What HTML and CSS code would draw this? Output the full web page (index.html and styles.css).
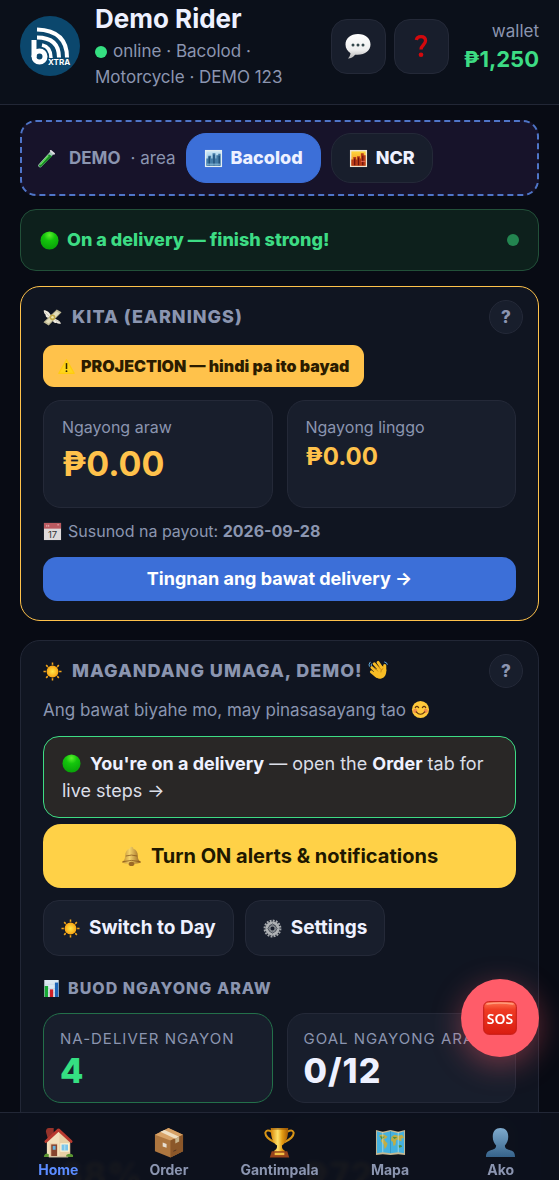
FILE: index.html
```
<!DOCTYPE html>
<html lang="en">

<head>
	<meta charset="UTF-8">
	<meta name="viewport" content="width=device-width, initial-scale=1">
	<title>Bxtra Rider</title>
	<link rel="stylesheet" href="styles.css">
</head>

<body>
	<svg class="sprite" aria-hidden="true">
		<defs>
			<radialGradient id="g-green" cx=".5" cy=".2" r=".9"><stop offset="0" stop-color="#5cf02c"/><stop offset=".35" stop-color="#14c60c"/><stop offset="1" stop-color="#069a08"/></radialGradient>
			<linearGradient id="g-white" x2="0" y2="1"><stop offset="0" stop-color="#fff"/><stop offset=".65" stop-color="#eee"/><stop offset="1" stop-color="#b5b5b5"/></linearGradient>
			<radialGradient id="g-sun"><stop offset="0" stop-color="#ffe648"/><stop offset="1" stop-color="#f9a413"/></radialGradient>
			<linearGradient id="g-gold"><stop offset="0" stop-color="#d98606"/><stop offset=".4" stop-color="#ffe169"/><stop offset=".65" stop-color="#e59c13"/><stop offset="1" stop-color="#a75b03"/></linearGradient>
			<linearGradient id="g-bell"><stop offset="0" stop-color="#b98425"/><stop offset=".4" stop-color="#f5d36b"/><stop offset="1" stop-color="#94601a"/></linearGradient>
			<linearGradient id="g-sky" x2="0" y2="1"><stop offset="0" stop-color="#c9e6f6"/><stop offset="1" stop-color="#78aed2"/></linearGradient>
			<linearGradient id="g-dusk" x2="0" y2="1"><stop offset="0" stop-color="#ffd73c"/><stop offset="1" stop-color="#ef7f1b"/></linearGradient>
			<linearGradient id="g-man" x2="0" y2="1"><stop offset="0" stop-color="#7fabcd"/><stop offset="1" stop-color="#36638b"/></linearGradient>
			<linearGradient id="g-sos" x2="0" y2="1"><stop offset="0" stop-color="#ff7551"/><stop offset=".25" stop-color="#ef3b23"/><stop offset="1" stop-color="#d91c11"/></linearGradient>
		</defs>
		<symbol id="i-ball" viewBox="0 0 20 20"><circle cx="10" cy="10" r="9.5" fill="url(#g-green)"/></symbol>
		<symbol id="i-chat" viewBox="0 0 28 28"><path d="M14 2C6.500 2 1.500 6.500 1.500 12.500c0 3.800 2 6.900 5 8.700-.2 2.200-1.100 3.800-2.700 5.300 3.200-.2 5.700-1.500 7.300-3.800 9.300 1 15.400-3.900 15.400-10.200C26.500 6.500 21.500 2 14 2z" fill="url(#g-white)"/><g fill="#34474b"><circle cx="9" cy="13" r="1.500"/><circle cx="14" cy="13" r="1.500"/><circle cx="19" cy="13" r="1.500"/></g></symbol>
		<symbol id="i-ask" viewBox="0 0 24 24"><path d="M8 6.800Q8.400 3.900 12 3.900q3.900 0 3.900 3.700c0 3.300-3.900 3.800-3.900 7.400" fill="none" stroke="#d3090d" stroke-width="2.800"/><circle cx="12" cy="19.500" r="2" fill="#d3090d"/></symbol>
		<symbol id="i-tube" viewBox="0 0 20 20"><path d="M15 1.500 1.900 16a1.900 1.900 0 0 0 2.700 2.700L18 5z" fill="#a6c7bb"/><path d="M12.500 5.500 2.500 16.500a1.400 1.400 0 0 0 2 2l11.500-11z" fill="#188b24"/><path d="m12 7-8.500 9.500" stroke="#68e45d" stroke-width="1.200"/><path d="m14.500 2 3.500 3" stroke="#e2dfe4" stroke-width="2" stroke-linecap="round"/></symbol>
		<symbol id="i-city" viewBox="0 0 20 20"><path fill="#e3eef2" d="M1 1h18v18H1z"/><path fill="url(#g-sky)" d="M2.500 2.500h15v15h-15z"/><path fill="#447ca7" d="M2.500 10h2V7h3v3h1.500V4.500h3V10h1V6.500h2V5h2.500v12.500h-15z"/><path d="M5.500 8v9M10.500 6v11M16 7v10" stroke="#1b4a75" stroke-width="1.300"/><path d="M3 16h14" stroke="#8fc2dd"/></symbol>
		<symbol id="i-dusk" viewBox="0 0 20 20"><path fill="#eee6d5" d="M1 1h18v18H1z"/><path fill="url(#g-dusk)" d="M2.500 2.500h15v15h-15z"/><path fill="#b83c18" d="M2.500 11h2V8.500h3V11h1V7.500h3V10h1V4.500h3v2h2v11h-15z"/><path d="M6 10v7M10 9v8M14.500 7v10" stroke="#6b120f" stroke-width="1.300"/><path d="M12.500 13h5" stroke="#eb6f5b"/></symbol>
		<symbol id="i-cash" viewBox="0 0 20 20"><path d="M9 9C7 4.500 4.500 2.500.8 2.400c0 2.200.7 3.700 2 4.800-.4 1.600.8 2.800 2.700 3.300zM11 11c4.200.8 6.700 2.200 8 5.400-2 .6-3.500.3-4.800-.9-1.800.8-3.200-.2-4.200-2.500z" fill="#f0ecdf"/><path d="m14.500 1.500 5 3L6 18.300.5 15z" fill="#bfb994"/><path d="m14 3.500 3.300 2L6 16.400 2.800 14.500z" fill="#e3ddb9"/><circle cx="10" cy="9.800" r="3" fill="#c3aa48"/><circle cx="10" cy="9.800" r="1.300" fill="#f1e6aa"/><path d="m2 4 5 5M18 15l-5-2" stroke="#beb8ab" stroke-width=".8"/></symbol>
		<symbol id="i-warn" viewBox="0 0 20 20"><path d="M10 2 19 18H1z" fill="#ffd51c" stroke="#ffcc0e" stroke-width="1.500" stroke-linejoin="round"/><path d="M10 6v7" stroke="#302700" stroke-width="1.800"/><circle cx="10" cy="15.500" r="1.100" fill="#302700"/></symbol>
		<symbol id="i-sun" viewBox="0 0 20 20"><path d="M10 .5v19M.5 10h19M3.300 3.300l13.400 13.400M16.700 3.300 3.300 16.700" stroke="#f2a51c" stroke-width="1.600"/><circle cx="10" cy="10" r="7" fill="#101521"/><circle cx="10" cy="10" r="6.200" fill="url(#g-sun)"/></symbol>
		<symbol id="i-wave" viewBox="0 0 22 22"><g fill="none" stroke="#f8bd25" stroke-linecap="round"><path d="m6.500 5 7 8M10.500 3.500l5.500 8M4 9l7 7M3.500 13.500 9 18" stroke-width="3"/><path d="M17.500 7v5" stroke-width="3.300"/></g><path d="m6.500 12 8-5 4.600 4c.5 5-1.600 8.500-5.100 9.500-3 .8-5.500-.8-8-3.500z" fill="#f8bd25"/><path d="m7 9 3.500 4M10 6.500l3.500 4.500M16 10q-3 .8-2.500 4" fill="none" stroke="#b57811" stroke-width=".8"/><path d="M1.500 8Q.3 5.500 2.500 3M3.600 7.500q-.8-1.300.5-2.800M17 3q3 .5 3.300 3" fill="none" stroke="#66afe0" stroke-width="1"/></symbol>
		<symbol id="i-smile" viewBox="0 0 20 20"><circle cx="10" cy="10" r="9" fill="#ffc93b"/><circle cx="4.500" cy="11.500" r="2.200" fill="#f28e4b"/><circle cx="15.500" cy="11.500" r="2.200" fill="#f28e4b"/><path d="M4.500 8q1.700-2.500 3.500 0M12 8q1.800-2.500 3.500 0M5.500 12.500q4.500 5 9 0" fill="none" stroke="#60340e" stroke-width="1.300" stroke-linecap="round"/></symbol>
		<symbol id="i-bell" viewBox="0 0 22 22"><path d="M11 .8a2 2 0 0 1 2 2c3.300 1 4.600 3.700 4.700 8 0 3 1 4.500 3.300 6.200-3 2.500-17 2.500-20 0 2.300-1.700 3.200-3.200 3.300-6.200C4.400 6.500 5.700 3.800 9 2.800a2 2 0 0 1 2-2z" fill="url(#g-bell)"/><path d="M1.500 16.500q9.500-2.800 19 0M5 10.500q6-2 12 0" fill="none" stroke="#86551b" stroke-width=".8"/><ellipse cx="11" cy="18.800" rx="3" ry="2.200" fill="#9c6925"/></symbol>
		<symbol id="i-gear" viewBox="0 0 20 20"><circle cx="10" cy="10" r="8.300" fill="none" stroke="#a4a8ac" stroke-width="2.200" stroke-dasharray="2 1.260"/><circle cx="10" cy="10" r="6" fill="none" stroke="#aeb1b4" stroke-width="3"/><circle cx="10" cy="10" r="3" fill="none" stroke="#8b9095" stroke-width="1.600"/><path d="M10 4v3.500M4 10h3.500M12.500 10H16M10 12.500V16" stroke="#777d84"/></symbol>
		<symbol id="i-chart" viewBox="0 0 20 20"><path fill="#dce8f2" d="M1.500 0h17v20h-17z"/><path d="M1.500 5h17M1.500 10h17M1.500 15h17" stroke="#b4c8da" stroke-width=".5"/><path fill="#16a934" d="M2 7h4v13H2z"/><path fill="#cf2027" d="M8 11h4v9H8z"/><path fill="#1d65b8" d="M14 3h4v17h-4z"/></symbol>
		<symbol id="i-home" viewBox="0 0 32 32"><path d="M3 5q0-4 3-4h5v11H5z" fill="#96332b"/><path d="M4 14 16 3l12 11v17H4z" fill="#f3e0bc"/><path d="m17 3 11 11v17H17z" fill="#e9d0a5"/><path d="M3 15 16 3l13 12" fill="none" stroke="#b9392e" stroke-width="3" stroke-linejoin="round" stroke-linecap="round"/><path d="M7 17h8v13H7z" fill="#e8c6a0"/><path d="M8.500 18h6v12h-6z" fill="#87452f"/><path d="M10 19.500h3v4h-3z" fill="#65b2df"/><path d="M18.500 17.500h8v7.500h-8z" fill="#7bc5e9" stroke="#fff3d4" stroke-width="1.300"/><path d="M22.500 18v7" stroke="#b7e3f3"/><path d="M1 30q1-4 5-2v3H1zM24 29q4-3 7 0v2h-7z" fill="#5a9632"/><path d="M6 31h20" stroke="#bbac91"/></symbol>
		<symbol id="i-box" viewBox="0 0 32 32"><path d="M16 1 31 8v17l-13 6.500L2 25V8z" fill="#ad763f"/><path d="m2 8 16 6 13-6L16 1z" fill="#d6a166"/><path d="M18 14 31 8v17l-13 6.500z" fill="#8b5729"/><path d="m7.500 5 15.500 7 4-2L12 3z" fill="#efdfc2"/><path d="m23 12 4-2v5l-4 2z" fill="#c9b58e"/><path d="m10 16 4 1.500v4L10 20z" fill="#e7ded1"/><path d="m21 25 3-1.300" stroke="#4f3420"/></symbol>
		<symbol id="i-cup" viewBox="0 0 32 32"><path d="M8 5Q3 2 1.500 5.500C.5 10 6 13 11 16M24 5q5-3 6.500.5C31.500 10 26 13 21 16" fill="none" stroke="#d89516" stroke-width="2"/><path d="M7 1h18c0 11-2.500 15.500-6.500 18 0 3 .8 4.200 3 5.500v1.500h-11v-1.500c2.200-1.300 3-2.500 3-5.500C9.500 16.500 7 12 7 1z" fill="url(#g-gold)"/><path d="M7.500 2h17" stroke="#8d4d04"/><path d="M8 25h16l2 6.500H6z" fill="#96421b"/><path d="M11 26.500h10v2.500H11z" fill="#f4c044"/></symbol>
		<symbol id="i-map" viewBox="0 0 32 32"><path d="m1 3 7 2 8-2 8 2 7-2v26l-7-1-8 1-8-1-7 1z" fill="#c7b991"/><path d="m2 4.500 6 2 8-2 8 2 6-2V27l-6-1-8 1-8-1-6 1z" fill="#45b1df"/><path d="M4 9q3-2 6-1l3 2-2 2-2 .5 2 2.500 2 2-1 3-2 3-1-5-3-3.500 1-2zM17 10l3-2 4 1 4-1 2 3-3 1 .5 3-2.500-1-1-1-2 .5-1 5-2 1-.5-4-2-1.500z" fill="#c0ad45"/><path d="m5 9.500 5 .5-3 3zM18 10l5 .5-3 2zM24 19l3-.5 1 2-3 1z" fill="#4e903e"/><path d="M8 5v21M24 5v21" stroke="#dcf1ec" opacity=".55"/><path d="M16 4v23" stroke="#2a7da6" opacity=".5"/></symbol>
		<symbol id="i-man" viewBox="0 0 32 32"><path d="M16 1c5 0 8 3.500 8 9 0 4-1.500 7-3.500 9 .2 3 1.500 3.700 5 4.700 3.700 1 5.500 3 5.500 7.300H1c0-4.300 1.800-6.300 5.500-7.300 3.500-1 4.800-1.700 5-4.700C9.500 17 8 14 8 10c0-5.500 3-9 8-9z" fill="url(#g-man)"/></symbol>
	</svg>

	<div class="app">
		<header class="topbar">
			<svg class="logo" viewBox="0 0 60 60" role="img" aria-label="Bxtra">
				<circle cx="30" cy="30" r="30" fill="#0b476d"/>
				<g fill="none" stroke="#fff">
					<path d="M17 13.500q30 1 30 28" stroke-width="4"/>
					<path d="M17 21.500q22 0 22 20" stroke-width="4"/>
					<path d="M22 29q9 2 9 13" stroke-width="3.500"/>
					<path d="M14 24v17" stroke-width="5"/>
					<circle cx="19.500" cy="40.500" r="5.500" stroke-width="5"/>
				</g>
				<text x="28" y="49" font-size="8" font-weight="700" fill="#fff">XTRA</text>
			</svg>
			<div class="who">
				<h1>Demo Rider</h1>
				<p><span class="dot"></span>online · Bacolod · Motorcycle · DEMO 123</p>
			</div>
			<button class="sq" aria-label="Chat"><svg class="ic-l"><use href="#i-chat"/></svg></button>
			<button class="sq" aria-label="Help"><svg class="ic-l"><use href="#i-ask"/></svg></button>
			<div class="wallet">
				<span>wallet</span>
				<b>₱1,250</b>
			</div>
		</header>

		<main>
			<div class="demo">
				<svg class="ic"><use href="#i-tube"/></svg>
				<b>DEMO</b>
				<span>· area</span>
				<button class="pill on"><svg class="ic"><use href="#i-city"/></svg>Bacolod</button>
				<button class="pill"><svg class="ic"><use href="#i-dusk"/></svg>NCR</button>
			</div>

			<div class="status">
				<svg class="ic"><use href="#i-ball"/></svg>
				<span>On a delivery — finish strong!</span>
				<i class="pulse"></i>
			</div>

			<section class="card gold">
				<div class="card-head">
					<h2><svg class="ic"><use href="#i-cash"/></svg>KITA (EARNINGS)</h2>
					<button class="help">?</button>
				</div>
				<div class="chip"><svg class="ic-s"><use href="#i-warn"/></svg>PROJECTION — hindi pa ito bayad</div>
				<div class="tiles">
					<div class="tile">
						<span>Ngayong araw</span>
						<b class="big">₱0.00</b>
					</div>
					<div class="tile">
						<span>Ngayong linggo</span>
						<b>₱0.00</b>
					</div>
				</div>
				<p class="payout">
					<svg class="ic" viewBox="0 0 20 20"><path fill="#ded9da" d="M1 1h18v18H1z"/><path fill="#ba5a60" d="M1 1h18v6H1z"/><path d="M4 3v2M6 3v2M15 3h2" stroke="#e9b4b6"/><text x="10" y="16.500" text-anchor="middle" font-size="10" fill="#333">17</text></svg>
					<span>Susunod na payout: <b>2026-09-28</b></span>
				</p>
				<button class="main-btn">Tingnan ang bawat delivery →</button>
			</section>

			<section class="card">
				<div class="card-head">
					<h2><svg class="ic"><use href="#i-sun"/></svg><span>MAGANDANG UMAGA, DEMO! <svg class="ic-m inline"><use href="#i-wave"/></svg></span></h2>
					<button class="help">?</button>
				</div>
				<p class="greet">Ang bawat biyahe mo, may pinasasayang tao <svg class="ic inline"><use href="#i-smile"/></svg></p>
				<div class="notice"><svg class="ic inline"><use href="#i-ball"/></svg><b>You're on a delivery</b> — open the <b>Order</b> tab for live steps →</div>
				<button class="alerts"><svg class="ic-m"><use href="#i-bell"/></svg>Turn ON alerts &amp; notifications</button>
				<div class="row">
					<button class="btn"><svg class="ic"><use href="#i-sun"/></svg>Switch to Day</button>
					<button class="btn"><svg class="ic"><use href="#i-gear"/></svg>Settings</button>
				</div>
				<h3><svg class="ic-s"><use href="#i-chart"/></svg>BUOD NGAYONG ARAW</h3>
				<div class="stats">
					<div class="stat done"><span>NA-DELIVER NGAYON</span><b>4</b></div>
					<div class="stat"><span>GOAL NGAYONG ARAW</span><b>0/12</b></div>
					<div class="stat amber"><span></span><b>68%</b></div>
					<div class="stat amber"><span></span><b>₱72</b></div>
				</div>
			</section>
		</main>

		<button class="sos" aria-label="SOS">
			<svg viewBox="0 0 34 34"><rect x=".7" y=".7" width="32.600" height="32.600" rx="5" fill="url(#g-sos)" stroke="#c51a13"/><path d="M4 3q13-2 26 0" fill="none" stroke="#ff9c7c" stroke-width="1.500" stroke-linecap="round"/><text x="17" y="22.500" text-anchor="middle" fill="#fff">SOS</text></svg>
		</button>

		<nav>
			<a href="#home" class="on"><svg><use href="#i-home"/></svg>Home</a>
			<a href="#order"><svg><use href="#i-box"/></svg>Order</a>
			<a href="#gantimpala"><svg><use href="#i-cup"/></svg>Gantimpala</a>
			<a href="#mapa"><svg><use href="#i-map"/></svg>Mapa</a>
			<a href="#ako"><svg><use href="#i-man"/></svg>Ako</a>
		</nav>
	</div>
</body>

</html>
```
FILE: styles.css
```
* {
	margin: 0;
	padding: 0;
	box-sizing: border-box;
}

body {
	background: #080b14;
	color: #eef1ff;
	font-family: Inter, "Liberation Sans", sans-serif;
	font-size: 17px;
	line-height: 26px;
}

button {
	font: inherit;
	color: inherit;
	cursor: pointer;
}

svg {
	flex: none;
}

.sprite {
	position: absolute;
	width: 0;
	height: 0;
}

.ic-s {
	width: 17px;
	height: 17px;
}

.ic {
	width: 19px;
	height: 19px;
}

.ic-m {
	width: 21px;
	height: 21px;
}

.ic-l {
	width: 28px;
	height: 28px;
}

.inline {
	display: inline-block;
	vertical-align: -3px;
}

.app {
	display: flex;
	flex-direction: column;
	height: 100vh;
}

/* top bar */
.topbar {
	display: flex;
	align-items: center;
	padding: 2px 20px 14px;
	background: #0b101a;
	border-bottom: 1px solid #222736;
	color: #8b95b0;
}

.logo {
	width: 60px;
	height: 60px;
	margin-right: 15px;
}

.who {
	flex: 1;
	min-width: 0;
}

.who h1 {
	font-size: 26px;
	line-height: 34px;
	color: #eef1ff;
	margin-bottom: 2px;
}

.dot {
	display: inline-block;
	width: 12px;
	height: 12px;
	margin-right: 6px;
	border-radius: 50%;
	background: #35e082;
	vertical-align: -1px;
}

.sq {
	display: flex;
	align-items: center;
	justify-content: center;
	width: 55px;
	height: 55px;
	margin-left: 8px;
	border: 1px solid #242938;
	border-radius: 16px;
	background: #181e2c;
}

.wallet {
	margin-left: 15px;
	text-align: right;
}

.wallet span,
.wallet b {
	display: block;
}

.wallet b {
	font-size: 22px;
	line-height: 30px;
	color: #3ddc84;
}

/* content */
main {
	flex: 1;
	min-height: 0;
	overflow-y: auto;
	scrollbar-width: none;
	padding: 15px 20px 90px;
}

.demo {
	display: flex;
	align-items: center;
	gap: 10px;
	padding: 11px 15px;
	border: 2px dashed #4f75c8;
	border-radius: 16px;
	background: #17132a;
	color: #8b95b0;
}

.demo b {
	margin-left: 3px;
}

.pill {
	display: flex;
	align-items: center;
	gap: 8px;
	height: 50px;
	padding: 0 17px;
	border: 1px solid #242938;
	border-radius: 20px;
	background: #181e2c;
	color: #eef1ff;
	font-size: 18px;
	font-weight: 800;
}

.pill.on {
	background: #3c6fd8;
	border-color: #3c6fd8;
}

.status {
	display: flex;
	align-items: center;
	gap: 8px;
	margin-top: 13px;
	padding: 17px 19px;
	border: 1px solid #225039;
	border-radius: 16px;
	background: #0d201c;
	color: #3ddc84;
	font-size: 18px;
	font-weight: 800;
}

.pulse {
	width: 12px;
	height: 12px;
	margin-left: auto;
	border-radius: 50%;
	background: #238550;
}

.card {
	margin-top: 19px;
	padding: 13px 22px 19px;
	border: 1px solid #222736;
	border-radius: 20px;
	background: #101521;
}

.card.gold {
	margin-top: 15px;
	border-color: #ffc24b;
}

.card-head {
	display: flex;
	align-items: center;
	justify-content: space-between;
	margin-right: -7px;
}

h2 {
	display: flex;
	align-items: center;
	gap: 10px;
	color: #8b95b0;
	font-size: 18px;
	font-weight: 800;
	letter-spacing: 1px;
}

.help {
	width: 34px;
	height: 34px;
	border: 1px solid #242938;
	border-radius: 50%;
	background: #181e2c;
	color: #8b95b0;
	font-weight: 800;
}

.chip {
	display: flex;
	align-items: center;
	gap: 6px;
	width: fit-content;
	margin-top: 11px;
	padding: 8px 15px;
	border-radius: 11px;
	background: #ffc24b;
	color: #2b1c00;
	font-size: 16px;
	font-weight: 900;
}

.tiles,
.stats {
	display: grid;
	grid-template-columns: 1fr 1fr;
	gap: 14px;
	margin-top: 13px;
}

.tile {
	padding: 13px 18px 19px;
	border: 1px solid #242938;
	border-radius: 18px;
	background: #181e2c;
}

.tile span,
.tile b,
.stat span,
.stat b {
	display: block;
}

.tile span {
	color: #8b95b0;
	font-size: 16px;
}

.tile b {
	color: #ffc24b;
	font-size: 24px;
	line-height: 34px;
}

.tile .big {
	font-size: 34px;
	line-height: 48px;
}

.payout {
	display: flex;
	align-items: center;
	gap: 6px;
	margin: 10px 0 13px;
	color: #8b95b0;
	font-size: 16px;
}

.main-btn {
	width: 100%;
	height: 44px;
	border: 0;
	border-radius: 14px;
	background: #3c6fd8;
	color: #fff;
	font-size: 18px;
	font-weight: 700;
}

.greet {
	margin-top: 9px;
	color: #8b95b0;
}

.notice {
	margin-top: 13px;
	padding: 13px 18px;
	border: 1px solid #3ddc84;
	border-radius: 16px;
	background: #292726;
	font-size: 18px;
	line-height: 27px;
	color: #dcdfe8;
}

.notice b {
	color: #eef1ff;
}

.notice .ic {
	margin-right: 9px;
}

.alerts,
.btn {
	display: flex;
	align-items: center;
	justify-content: center;
	gap: 9px;
	font-weight: 700;
}

.alerts {
	width: 100%;
	height: 64px;
	margin-top: 6px;
	border: 0;
	border-radius: 18px;
	background: #ffd147;
	color: #201800;
	font-size: 20px;
}

.row {
	display: flex;
	gap: 11px;
	margin-top: 12px;
}

.btn {
	height: 56px;
	padding: 0 17px;
	border: 1px solid #242938;
	border-radius: 16px;
	background: #181e2c;
	font-size: 19px;
}

h3 {
	display: flex;
	align-items: center;
	gap: 8px;
	margin-top: 19px;
	color: #8b95b0;
	font-size: 16px;
	font-weight: 800;
	letter-spacing: 1px;
}

.stats {
	margin-top: 12px;
}

.stat {
	min-width: 0;
	padding: 13px 16px 11px;
	border: 1px solid #242938;
	border-radius: 18px;
	background: #181e2c;
}

.stat span {
	height: 24px;
	color: #8b95b0;
	font-size: 15px;
	letter-spacing: 1px;
	line-height: 24px;
	white-space: nowrap;
}

.stat b {
	font-size: 34px;
	font-weight: 800;
	letter-spacing: 1px;
	line-height: 40px;
}

.stat.done {
	border-color: #23704a;
}

.stat.done b {
	color: #35e082;
}

.stat.amber b {
	color: #ffc24b;
}

.sos {
	position: fixed;
	right: 20px;
	bottom: 123px;
	display: flex;
	align-items: center;
	justify-content: center;
	width: 78px;
	height: 78px;
	border: 0;
	border-radius: 50%;
	background: #ff5c69;
	box-shadow: 0 8px 30px rgba(255, 92, 105, 0.4);
}

.sos svg {
	width: 34px;
	height: 34px;
}

.sos text {
	font-family: "Noto Sans", sans-serif;
	font-size: 14px;
	font-weight: 600;
}

nav {
	position: fixed;
	left: 0;
	right: 0;
	bottom: 0;
	display: flex;
	padding: 14px 3px 0;
	border-top: 1px solid #222736;
	background: rgba(12, 17, 28, 0.96);
	backdrop-filter: blur(2px);
}

nav a {
	display: flex;
	flex: 1;
	flex-direction: column;
	align-items: center;
	gap: 2px;
	color: #8b95b0;
	font-size: 14px;
	font-weight: 700;
	line-height: 20px;
	text-decoration: none;
}

nav svg {
	width: 31px;
	height: 31px;
}

nav a.on {
	color: #5b8cff;
}
```
